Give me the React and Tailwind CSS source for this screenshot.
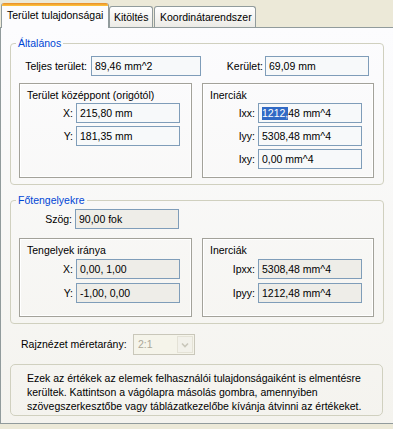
import React from "react";

function Field({ value, w = "w-[104px]", grey, children }) {
  return (
    <div
      className={`${w} h-[20px] border border-[#7F9DB9] flex items-center px-[3px] whitespace-nowrap ${
        grey ? "bg-[#EEEDE8]" : "bg-[#F7F9FA]"
      }`}
    >
      {children || value}
    </div>
  );
}

function Row({ label, labelW, value, grey, mt = "mt-[3px]", children }) {
  return (
    <div className={`flex items-center ${mt}`}>
      <div className={`${labelW} text-right pr-[3px]`}>{label}</div>
      <Field value={value} grey={grey}>
        {children}
      </Field>
    </div>
  );
}

function Sunken({ w, h, title, children }) {
  return (
    <div
      className={`${w} ${h} border border-[#A3A29A] shadow-[inset_1px_1px_0_#fff,inset_-1px_-1px_0_#fff] pt-[5px]`}
    >
      <div className="pl-[7px] h-[13px] leading-[13px]">{title}</div>
      {children}
    </div>
  );
}

function Group({ title, className, children }) {
  return (
    <fieldset
      className={`border border-[#D0D0BF] rounded-[4px] ml-[9px] w-[374px] ${className}`}
    >
      <legend className="ml-[5px] px-[2px] text-[#0046D5] leading-[13px]">
        {title}
      </legend>
      {children}
    </fieldset>
  );
}

export default function App() {
  return (
    <div className="w-[393px] h-[429px] bg-[#ECE9D8] overflow-hidden text-[10.5px] leading-[13px] text-black font-['Liberation_Sans',Arial,sans-serif]">
      {/* tabs */}
      <div className="h-[27px] flex items-end pl-[1px] relative z-10">
        <div className="h-[25px] -mb-px w-[108px] bg-[#FCFCFE] border-x border-[#919B9C] rounded-t-[3px] overflow-hidden">
          <div className="h-[3px] bg-gradient-to-b from-[#E68B2C] to-[#FFC73C]" />
          <div className="pl-[5px] pt-[3px] whitespace-nowrap">Terület tulajdonságai</div>
        </div>
        <div className="h-[21px] w-[44px] border border-b-0 border-[#919B9C] rounded-t-[3px] bg-gradient-to-b from-white to-[#ECEBE6] pl-[4px] pt-[4px] whitespace-nowrap">
          Kitöltés
        </div>
        <div className="h-[21px] w-[102px] ml-[1px] border border-b-0 border-[#919B9C] rounded-t-[3px] bg-gradient-to-b from-white to-[#ECEBE6] pl-[5px] pt-[4px] whitespace-nowrap">
          Koordinátarendszer
        </div>
      </div>

      {/* page */}
      <div className="h-[397px] w-[396px] border border-[#919B9C] bg-gradient-to-b from-[#FCFCFE] to-[#F4F3EE] pt-[9px]">
        <Group title="Általános">
          <div className="flex items-center mt-[6px]">
            <div className="w-[80px] text-right pr-[4px]">Teljes terület:</div>
            <Field value="89,46 mm^2" w="w-[110px]" />
            <div className="w-[64px] text-right pr-[2px]">Kerület:</div>
            <Field value="69,09 mm" w="w-[104px]" />
          </div>
          <div className="flex mt-[7px] ml-[8px] mb-[6px]">
            <Sunken w="w-[173px]" h="h-[95px]" title="Terület középpont (origótól)">
              <Row label="X:" labelW="w-[56px]" value="215,80 mm" mt="mt-[1px]" />
              <Row label="Y:" labelW="w-[56px]" value="181,35 mm" />
            </Sunken>
            <Sunken w="w-[172px] ml-[10px]" h="h-[95px]" title="Inerciák">
              <Row label="Ixx:" labelW="w-[55px]" mt="mt-[1px]">
                <span className="bg-[#316AC5] text-white">1212,</span>
                <span>48 mm^4</span>
              </Row>
              <Row label="Iyy:" labelW="w-[55px]" value="5308,48 mm^4" />
              <Row label="Ixy:" labelW="w-[55px]" value="0,00 mm^4" />
            </Sunken>
          </div>
        </Group>

        <Group title="Főtengelyekre" className="mt-[9px]">
          <Row label="Szög:" labelW="w-[64px]" value="90,00 fok" grey mt="mt-[2px]" />
          <div className="flex mt-[9px] ml-[8px] mb-[6px]">
            <Sunken w="w-[173px]" h="h-[79px]" title="Tengelyek iránya">
              <Row label="X:" labelW="w-[56px]" value="0,00, 1,00" grey mt="mt-[2px]" />
              <Row label="Y:" labelW="w-[56px]" value="-1,00, 0,00" grey mt="mt-[4px]" />
            </Sunken>
            <Sunken w="w-[172px] ml-[10px]" h="h-[79px]" title="Inerciák">
              <Row label="Ipxx:" labelW="w-[55px]" value="5308,48 mm^4" grey mt="mt-[2px]" />
              <Row label="Ipyy:" labelW="w-[55px]" value="1212,48 mm^4" grey mt="mt-[4px]" />
            </Sunken>
          </div>
        </Group>

        <div className="flex items-center mt-[10px] ml-[20px]">
          <div className="w-[112px]">Rajznézet méretarány:</div>
          <div className="w-[62px] h-[21px] border border-[#C9C7BA] bg-[#F5F4EA] flex items-center">
            <div className="flex-1 pl-[4px] text-[#ACA899]">2:1</div>
            <div className="w-[16px] h-[17px] mr-[1px] bg-[#F2F1EA] border border-[#E4E2D6] flex items-center justify-center">
              <svg width="8" height="6" viewBox="0 0 8 6">
                <path d="M1 1.5 L4 4.5 L7 1.5" fill="none" stroke="#C9C7BA" strokeWidth="1.6" />
              </svg>
            </div>
          </div>
        </div>

        <div className="mt-[9px] ml-[9px] w-[373px] h-[52px] border border-[#D0D0BF] rounded-[5px] pl-[16px] pt-[6px] leading-[14px] whitespace-nowrap">
          Ezek az értékek az elemek felhasználói tulajdonságaiként is elmentésre
          <br />
          kerültek. Kattintson a vágólapra másolás gombra, amennyiben
          <br />
          szövegszerkesztőbe vagy táblázatkezelőbe kívánja átvinni az értékeket.
        </div>
      </div>
    </div>
  );
}
